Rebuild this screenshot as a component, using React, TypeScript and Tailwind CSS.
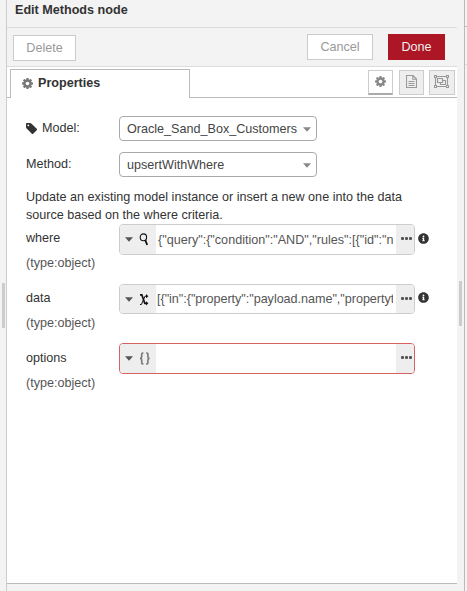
import React from "react";
import { FaInfoCircle } from "react-icons/fa";

function Cog({ className = "" }: { className?: string }) {
  return (
    <svg viewBox="128 128 1536 1536" className={`shrink-0 ${className}`} fill="currentColor">
      <path d="M1152 896q0-106-75-181t-181-75-181 75-75 181 75 181 181 75 181-75 75-181zm512-109v222q0 12-8 23t-20 13l-185 28q-19 54-39 91 35 50 107 138 10 12 10 25t-9 23q-27 37-99 108t-94 71q-12 0-26-9l-138-108q-44 23-91 38-16 136-29 186-7 28-36 28h-222q-14 0-24.5-8.5t-11.5-21.5l-28-184q-49-16-90-37l-141 107q-10 9-25 9-14 0-25-11-126-114-165-168-7-10-7-23 0-12 8-23 15-21 51-66.5t54-70.5q-27-50-41-99l-183-27q-13-2-21-12.5t-8-23.5v-222q0-12 8-23t19-13l186-28q14-46 39-92-40-57-107-138-10-12-10-24 0-10 9-23 26-36 98.5-107.5t94.5-71.5q13 0 26 10l138 107q44-23 91-38 16-136 29-186 7-28 36-28h222q14 0 24.5 8.5t11.5 21.5l28 184q49 16 90 37l142-107q9-9 24-9 13 0 25 10 129 119 165 170 7 8 7 22 0 12-8 23-15 21-51 66.5t-54 70.5q26 50 41 98l183 28q13 2 21 12.5t8 23.5z" />
    </svg>
  );
}

function Tag() {
  return (
    <svg viewBox="128 128 1516 1516" className="mr-[5px] size-[11px] shrink-0" fill="currentColor">
      <path d="M576 448q0-53-37.5-90.5t-90.5-37.5-90.5 37.5-37.5 90.5 37.5 90.5 90.5 37.5 90.5-37.5 37.5-90.5zm1067 576q0 53-37 90l-491 492q-39 37-91 37-53 0-90-37l-715-716q-38-37-64.5-101t-26.5-117v-416q0-52 38-90t90-38h416q53 0 117 26.5t102 64.5l715 714q37 39 37 91z" />
    </svg>
  );
}

function FileIcon() {
  return (
    <svg width="11" height="13" viewBox="0 0 11 13" fill="none" stroke="#999">
      <path d="M0.5 0.5H7L10.5 4V12.5H0.5z M6.8 0.5V4.2H10.5" strokeWidth="1.1" />
      <path d="M2.5 6.5H8.5M2.5 8.5H8.5M2.5 10.5H8.5" />
    </svg>
  );
}

function GroupIcon() {
  return (
    <svg width="15" height="13" viewBox="0 0 15 13" fill="none" stroke="#999">
      <path d="M1.5 1.5H13.5V11.5H1.5z" strokeWidth="1.1" />
      <path d="M3.5 3.5H8.5V7.5H3.5z M8.5 5.5H11.5V9.5H6.5V7.5" strokeWidth="1.1" />
      <path d="M0 0h3v3H0zM12 0h3v3H12zM0 10h3v3H0zM12 10h3v3H12z" fill="#999" stroke="none" />
      <path d="M1 1h1v1H1zM13 1h1v1H13zM1 11h1v1H1zM13 11h1v1H13z" fill="#eee" stroke="none" />
    </svg>
  );
}

function Caret({ className = "" }: { className?: string }) {
  return (
    <svg width="8" height="5" viewBox="0 0 8 5" className={`shrink-0 ${className}`}>
      <path d="M0 0.3h8L4 4.7z" fill="currentColor" />
    </svg>
  );
}

function Select({ value }: { value: string }) {
  return (
    <div className="flex h-[25px] w-[198px] items-center justify-between rounded-[4px] border border-[#aaa] bg-white pr-[5px] pl-[7px] text-[#444]">
      <span className="pt-px whitespace-nowrap">{value}</span>
      <Caret className="mt-px text-[#888]" />
    </div>
  );
}

function QueryIcon() {
  return (
    <svg width="10" height="13" viewBox="0 0 10 13" fill="none" stroke="#111">
      <ellipse cx="4.4" cy="4.3" rx="3.2" ry="3.4" strokeWidth="1.1" />
      <path d="M6.3 7.2L8.2 12" strokeWidth="1.8" />
    </svg>
  );
}

function MappingIcon() {
  return (
    <svg width="10" height="13" viewBox="0 0 10 13" fill="none" stroke="#111">
      <path d="M1 1.8H2.8L5.8 10.3H8" strokeWidth="1.7" />
      <path d="M1 11.5H2.4L6 3.2H8" strokeWidth="1" />
      <path d="M7 1L9.4 3.2L7 5.2zM7 8.3L9.4 10.3L7 12.4z" fill="#111" stroke="none" />
    </svg>
  );
}

function BracesIcon() {
  return (
    <svg width="12" height="13" viewBox="0 0 12 13" fill="none" stroke="#777" strokeWidth="1.6">
      <path d="M4.4 1H3.7Q2.7 1 2.7 2.2V4.8Q2.7 6.4 1 6.4Q2.7 6.4 2.7 8V10.7Q2.7 11.9 3.7 11.9H4.4" />
      <path d="M7.2 1H7.9Q8.9 1 8.9 2.2V4.8Q8.9 6.4 10.6 6.4Q8.9 6.4 8.9 8V10.7Q8.9 11.9 7.9 11.9H7.2" />
    </svg>
  );
}

type FieldProps = {
  name: string;
  icon: React.ReactNode;
  value: string;
  box: string;
  text?: string;
  info?: string;
};

function Field({ name, icon, value, box, text = "", info }: FieldProps) {
  return (
    <div className="flex h-[60px]">
      <div className="w-[93px] shrink-0 pt-[2px] leading-[25px]">
        <div className="h-[25px]">{name}</div>
        <div className="text-[#555]">(type:object)</div>
      </div>
      <div className={`flex w-[296px] shrink-0 overflow-hidden rounded-[4px] border bg-white ${box}`}>
        <div className="flex w-[36px] shrink-0 items-center bg-[#eee] pl-[5px]">
          <Caret className="text-[#555]" />
          <span className="ml-[6px]">{icon}</span>
        </div>
        <div className={`mr-[3px] flex flex-1 items-center overflow-hidden pt-px whitespace-nowrap text-[#555] ${text}`}>
          {value}
        </div>
        <div className="flex w-[18px] shrink-0 items-center gap-px bg-[#eee] pb-[2px] pl-[5px]">
          <i className="size-[3px] rounded-[1px] bg-[#555]" />
          <i className="size-[3px] rounded-[1px] bg-[#555]" />
          <i className="size-[3px] rounded-[1px] bg-[#555]" />
        </div>
      </div>
      {info && <FaInfoCircle className={`ml-[3px] size-[11px] text-[#333] ${info}`} />}
    </div>
  );
}

export default function App() {
  return (
    <div className="flex h-[591px] w-[467px] overflow-hidden bg-[#f3f3f3] font-['Liberation_Sans',Arial,sans-serif] text-[12.6px] text-[#333]">
      <div className="flex w-[7px] shrink-0 flex-col items-end border-r border-[#ccc] pt-[283px] pr-px">
        <div className="h-[45px] w-[3px] bg-[#ccc]" />
      </div>

      <div className="flex w-[450px] shrink-0 flex-col">
        <header className="h-[28px] border-b border-[#ddd] pl-[8px] leading-[21px] font-bold">
          Edit Methods node
        </header>
        <div className="flex h-[39px] items-start border-b border-[#ddd] pl-[6px] text-[#999]">
          <button className="mt-[7px] h-[26px] w-[63px] border border-[#ccc] bg-white">Delete</button>
          <button className="mt-[6px] ml-[231px] h-[26px] w-[66px] border border-[#ccc] bg-white">Cancel</button>
          <button className="mt-[6px] ml-[15px] h-[26px] w-[57px] bg-[#ad1625] text-[#eee]">Done</button>
        </div>

        <div className="flex h-[31px] bg-white">
          <div className="w-[3px] border-b border-[#bbb]" />
          <div className="mt-[2px] flex w-[180px] items-center border border-b-0 border-[#bbb] pb-[2px] pl-[11px] font-bold">
            <Cog className="mr-[5px] size-[11px] text-[#777]" />
            Properties
          </div>
          <div className="flex flex-1 items-start justify-end border-b border-[#bbb] pt-[3px] pr-[2px] text-[#888]">
            <div className="flex h-[25px] w-[25px] items-center justify-center border border-b-2 border-[#ccc] border-b-[#aaa] pb-px">
              <Cog className="size-[11px]" />
            </div>
            <div className="ml-[6px] flex h-[25px] w-[25px] items-center justify-center border border-[#ccc] bg-[#eee] pb-[2px]">
              <FileIcon />
            </div>
            <div className="ml-[5px] flex h-[25px] w-[26px] items-center justify-center border border-[#ccc] bg-[#eee] pr-px pb-[2px]">
              <GroupIcon />
            </div>
          </div>
        </div>

        <main className="h-[486px] border-b border-[#bbb] bg-white pt-[18px] pl-[19px]">
          <div className="flex h-[36px]">
            <div className="flex h-[24px] w-[93px] items-center">
              <Tag />
              Model:
            </div>
            <Select value="Oracle_Sand_Box_Customers" />
          </div>
          <div className="flex h-[36px]">
            <div className="h-[24px] w-[93px] leading-[24px]">Method:</div>
            <Select value="upsertWithWhere" />
          </div>
          <p className="h-[36px] leading-[18px] whitespace-nowrap">
            Update an existing model instance or insert a new one into the data
            <br />
            source based on the where criteria.
          </p>
          <Field
            name="where"
            icon={<QueryIcon />}
            value={'{"query":{"condition":"AND","rules":[{"id":"n'}
            box="h-[31px] border-[#ccc]"
            text="pl-[2px]"
            info="mt-[9px]"
          />
          <Field
            name="data"
            icon={<MappingIcon />}
            value={'[{"in":{"property":"payload.name","propertyt'}
            box="h-[30px] border-[#ccc]"
            text="pl-[1px] tracking-[-0.03px]"
            info="mt-[8px]"
          />
          <Field
            name="options"
            icon={<BracesIcon />}
            value=""
            box="mt-[-1px] h-[31px] border-[#d6615f]"
          />
        </main>
      </div>

      <div className="flex w-[8px] shrink-0 flex-col border-r border-[#bbb] pt-[281px] pl-[2px]">
        <div className="h-[45px] w-[3px] bg-[#ccc]" />
      </div>
      <div className="flex flex-1 flex-col">
        <div className="h-[27px] border-b border-[#bbb]" />
        <div className="h-[38px] border-b border-[#ddd]" />
      </div>
    </div>
  );
}
